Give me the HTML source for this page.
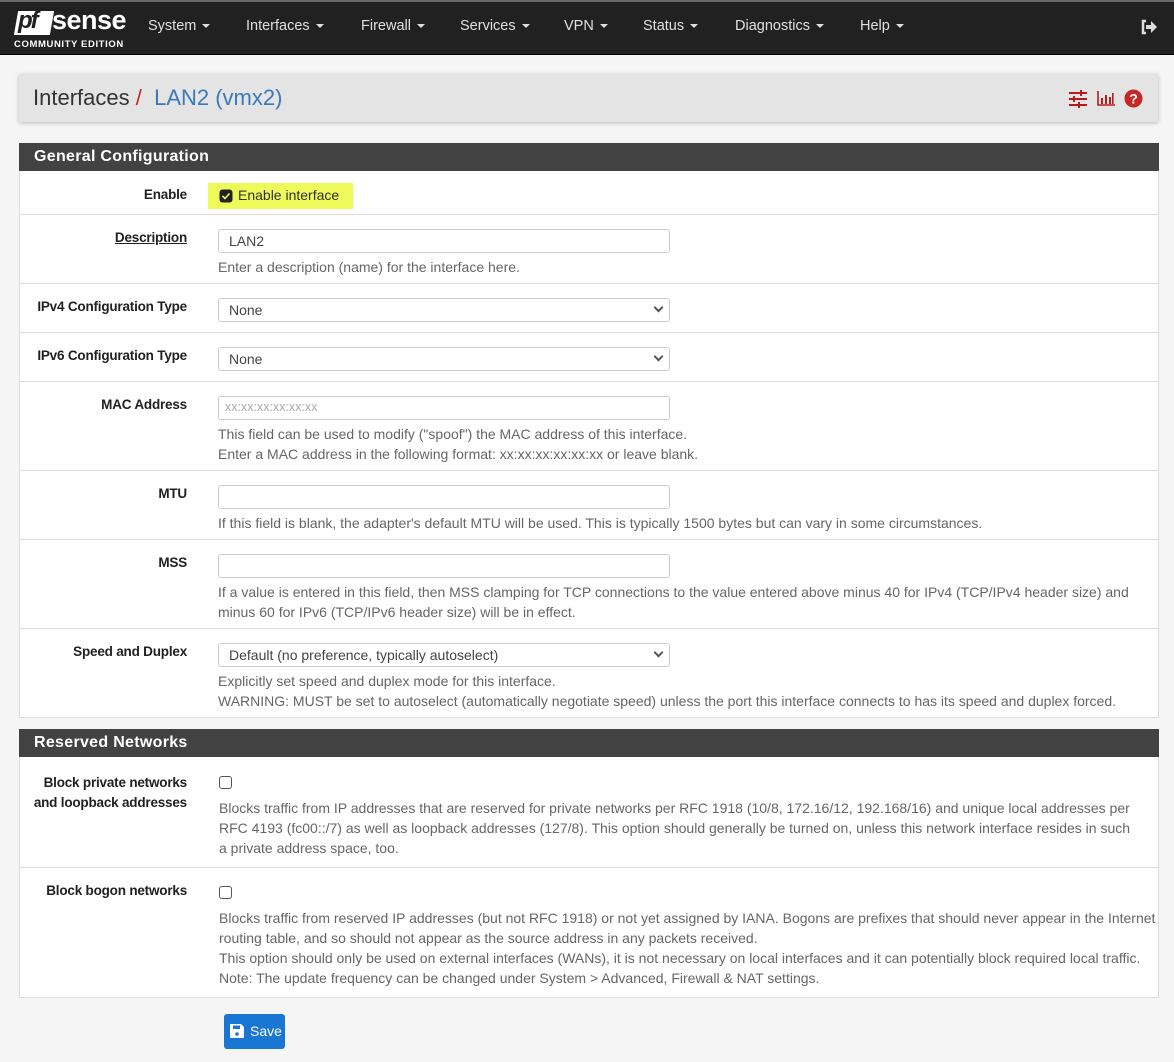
<!DOCTYPE html>
<html><head><meta charset="utf-8"><style>
*{box-sizing:border-box;margin:0;padding:0}
body{width:1174px;height:1062px;background:#f5f5f5;font-family:"Liberation Sans",sans-serif;font-size:14px;color:#212121;position:relative;overflow:hidden}
.abs{position:absolute}
.nav{left:0;top:0;width:1174px;height:55px;background:#212121;border-top:2px solid #6a6a6a;border-bottom:1px solid #000}
.nav .it{position:absolute;top:16px;color:#e0e0e0;font-size:14.5px}
.caret{display:inline-block;width:0;height:0;border-left:4px solid transparent;border-right:4px solid transparent;border-top:4px solid #e0e0e0;vertical-align:middle;margin-left:6px}
.bc{left:19px;top:74px;width:1139px;height:48px;background:#e4e4e4;box-shadow:0 1px 4px rgba(0,0,0,.25);border-radius:2px}
.panel{left:19px;width:1140px;background:#fff;border:1px solid #ddd;border-top:none}
.ph{left:19px;width:1140px;height:28px;background:#424242;color:#fff;font-weight:bold;font-size:16px;padding:5px 15px;letter-spacing:.3px}
.line{left:20px;width:1138px;height:1px;background:#ddd}
.lbl{right:987px;font-weight:bold;font-size:13.5px;letter-spacing:-.2px;color:#212121;text-align:right}
.inp{left:218px;width:452px;height:24px;border:1px solid #ccc;border-radius:3px;background:#fff;font-size:14px;padding:3px 10px;color:#444}
.inp .dd{position:absolute;right:7px;width:7px;height:7px;border-right:2px solid #555;border-bottom:2px solid #555;transform:rotate(45deg);top:5px}
.help{left:218px;color:#666;font-size:14px;line-height:20px}
.cb{width:13px;height:13px;border:1px solid #555;border-radius:3px;background:#fff}
</style></head><body>
<div class="abs nav">
  <div class="abs" style="left:16px;top:9px;width:36px;height:24px;background:#fff;transform:skewX(-10deg)"></div>
  <div class="abs" style="left:18px;top:5px;font-size:24px;font-weight:bold;font-style:italic;color:#212121;letter-spacing:-2px">pf</div>
  <div class="abs" style="left:52px;top:3px;font-size:27px;font-weight:bold;color:#fff;letter-spacing:-.5px">sense</div>
  <div class="abs" style="left:14px;top:37px;font-size:9.5px;font-weight:bold;color:#fff;letter-spacing:.6px">COMMUNITY EDITION</div>
  <div class="it" style="left:148px">System<span class="caret"></span></div>
  <div class="it" style="left:246px">Interfaces<span class="caret"></span></div>
  <div class="it" style="left:361px">Firewall<span class="caret"></span></div>
  <div class="it" style="left:460px">Services<span class="caret"></span></div>
  <div class="it" style="left:564px">VPN<span class="caret"></span></div>
  <div class="it" style="left:643px">Status<span class="caret"></span></div>
  <div class="it" style="left:735px">Diagnostics<span class="caret"></span></div>
  <div class="it" style="left:860px">Help<span class="caret"></span></div>
  <svg class="abs" style="left:1140px;top:16px" width="18" height="18" viewBox="0 0 18 18"><path d="M6 3H3v12h3" fill="none" stroke="#ddd" stroke-width="2.5"/><path d="M6 7h5V3l6 6-6 6v-4H6z" fill="#ddd"/></svg>
</div>
<div class="abs bc">
  <div class="abs" style="left:14px;top:11px;font-size:22px;color:#333">Interfaces <span style="color:#c62828">/</span>&nbsp; <span style="color:#3a7ab8">LAN2 (vmx2)</span></div>
  <svg class="abs" style="left:1049px;top:16px" width="20" height="18" viewBox="0 0 20 18"><g stroke="#b71c1c" stroke-width="2"><path d="M1 3h18M1 9h18M1 15h18"/></g><g fill="#b71c1c"><rect x="12" y="0" width="2" height="6"/><rect x="5" y="6" width="2" height="6"/><rect x="10" y="12" width="2" height="6"/></g></svg>
  <svg class="abs" style="left:1078px;top:17px" width="18" height="15" viewBox="0 0 18 15"><path d="M1 0v14h17" fill="none" stroke="#b71c1c" stroke-width="1.6"/><g fill="#b71c1c"><rect x="4" y="7" width="2" height="6"/><rect x="8" y="4" width="2" height="9"/><rect x="12" y="6" width="2" height="7"/><rect x="15" y="2" width="1.6" height="11"/></g></svg>
  <svg class="abs" style="left:1105px;top:15px" width="19" height="19" viewBox="0 0 19 19"><circle cx="9.5" cy="9.5" r="9" fill="#c62828"/><text x="9.5" y="14.5" text-anchor="middle" font-family="Liberation Sans" font-weight="bold" font-size="14" fill="#fff">?</text></svg>
</div>

<div class="abs ph" style="top:143px">General Configuration</div>
<div class="abs panel" style="top:171px;height:547px"></div>
<div class="abs line" style="top:214px"></div>
<div class="abs line" style="top:283px"></div>
<div class="abs line" style="top:332px"></div>
<div class="abs line" style="top:381px"></div>
<div class="abs line" style="top:470px"></div>
<div class="abs line" style="top:539px"></div>
<div class="abs line" style="top:628px"></div>

<div class="abs lbl" style="top:187px">Enable</div>
<div class="abs" style="left:208px;top:183px;width:145px;height:26px;background:#eefa5a"></div>
<svg class="abs" style="left:219px;top:189px" width="14" height="14" viewBox="0 0 14 14"><rect x="0.5" y="0.5" width="13" height="13" rx="3" fill="#222"/><path d="M3.5 7l2.5 2.5 4.5-5" fill="none" stroke="#eefa5a" stroke-width="1.6"/></svg>
<div class="abs" style="left:238px;top:187px;color:#333">Enable interface</div>

<div class="abs lbl" style="top:230px;text-decoration:underline">Description</div>
<div class="abs inp" style="top:229px">LAN2</div>
<div class="abs help" style="top:257px">Enter a description (name) for the interface here.</div>

<div class="abs lbl" style="top:299px">IPv4 Configuration Type</div>
<div class="abs inp" style="top:298px">None<span class="dd"></span></div>

<div class="abs lbl" style="top:348px">IPv6 Configuration Type</div>
<div class="abs inp" style="top:347px">None<span class="dd"></span></div>

<div class="abs lbl" style="top:397px">MAC Address</div>
<div class="abs inp" style="top:396px;color:#aaa;font-size:12.5px;padding-left:6px">xx:xx:xx:xx:xx:xx</div>
<div class="abs help" style="top:424px">This field can be used to modify ("spoof") the MAC address of this interface.<br>Enter a MAC address in the following format: xx:xx:xx:xx:xx:xx or leave blank.</div>

<div class="abs lbl" style="top:486px">MTU</div>
<div class="abs inp" style="top:485px"></div>
<div class="abs help" style="top:513px">If this field is blank, the adapter's default MTU will be used. This is typically 1500 bytes but can vary in some circumstances.</div>

<div class="abs lbl" style="top:555px">MSS</div>
<div class="abs inp" style="top:554px"></div>
<div class="abs help" style="top:582px;width:912px">If a value is entered in this field, then MSS clamping for TCP connections to the value entered above minus 40 for IPv4 (TCP/IPv4 header size) and minus 60 for IPv6 (TCP/IPv6 header size) will be in effect.</div>

<div class="abs lbl" style="top:644px">Speed and Duplex</div>
<div class="abs inp" style="top:643px">Default (no preference, typically autoselect)<span class="dd"></span></div>
<div class="abs help" style="top:671px;width:930px">Explicitly set speed and duplex mode for this interface.<br>WARNING: MUST be set to autoselect (automatically negotiate speed) unless the port this interface connects to has its speed and duplex forced.</div>

<div class="abs ph" style="top:729px">Reserved Networks</div>
<div class="abs panel" style="top:757px;height:241px"></div>
<div class="abs line" style="top:867px"></div>

<div class="abs lbl" style="top:773px;line-height:20px">Block private networks<br>and loopback addresses</div>
<div class="abs cb" style="left:219px;top:776px"></div>
<div class="abs help" style="left:219px;top:798px;width:922px">Blocks traffic from IP addresses that are reserved for private networks per RFC 1918 (10/8, 172.16/12, 192.168/16) and unique local addresses per RFC 4193 (fc00::/7) as well as loopback addresses (127/8). This option should generally be turned on, unless this network interface resides in such a private address space, too.</div>

<div class="abs lbl" style="top:883px">Block bogon networks</div>
<div class="abs cb" style="left:219px;top:886px"></div>
<div class="abs help" style="left:219px;top:908px;width:937px">Blocks traffic from reserved IP addresses (but not RFC 1918) or not yet assigned by IANA. Bogons are prefixes that should never appear in the Internet routing table, and so should not appear as the source address in any packets received.<br>This option should only be used on external interfaces (WANs), it is not necessary on local interfaces and it can potentially block required local traffic.<br>Note: The update frequency can be changed under System &gt; Advanced, Firewall &amp; NAT settings.</div>

<div class="abs" style="left:224px;top:1014px;width:61px;height:35px;background:#1976d2;border-radius:3px;color:#fff;font-size:14px;padding:9px 0 0 26px">Save</div>
<svg class="abs" style="left:229px;top:1023px" width="16" height="16" viewBox="0 0 16 16"><path d="M1 2a1 1 0 0 1 1-1h10l3 3v10a1 1 0 0 1-1 1H2a1 1 0 0 1-1-1z" fill="#fff"/><rect x="4" y="2.5" width="7" height="3.5" fill="#1976d2"/><circle cx="8" cy="11" r="1.8" fill="#1976d2"/></svg>
</body></html>
